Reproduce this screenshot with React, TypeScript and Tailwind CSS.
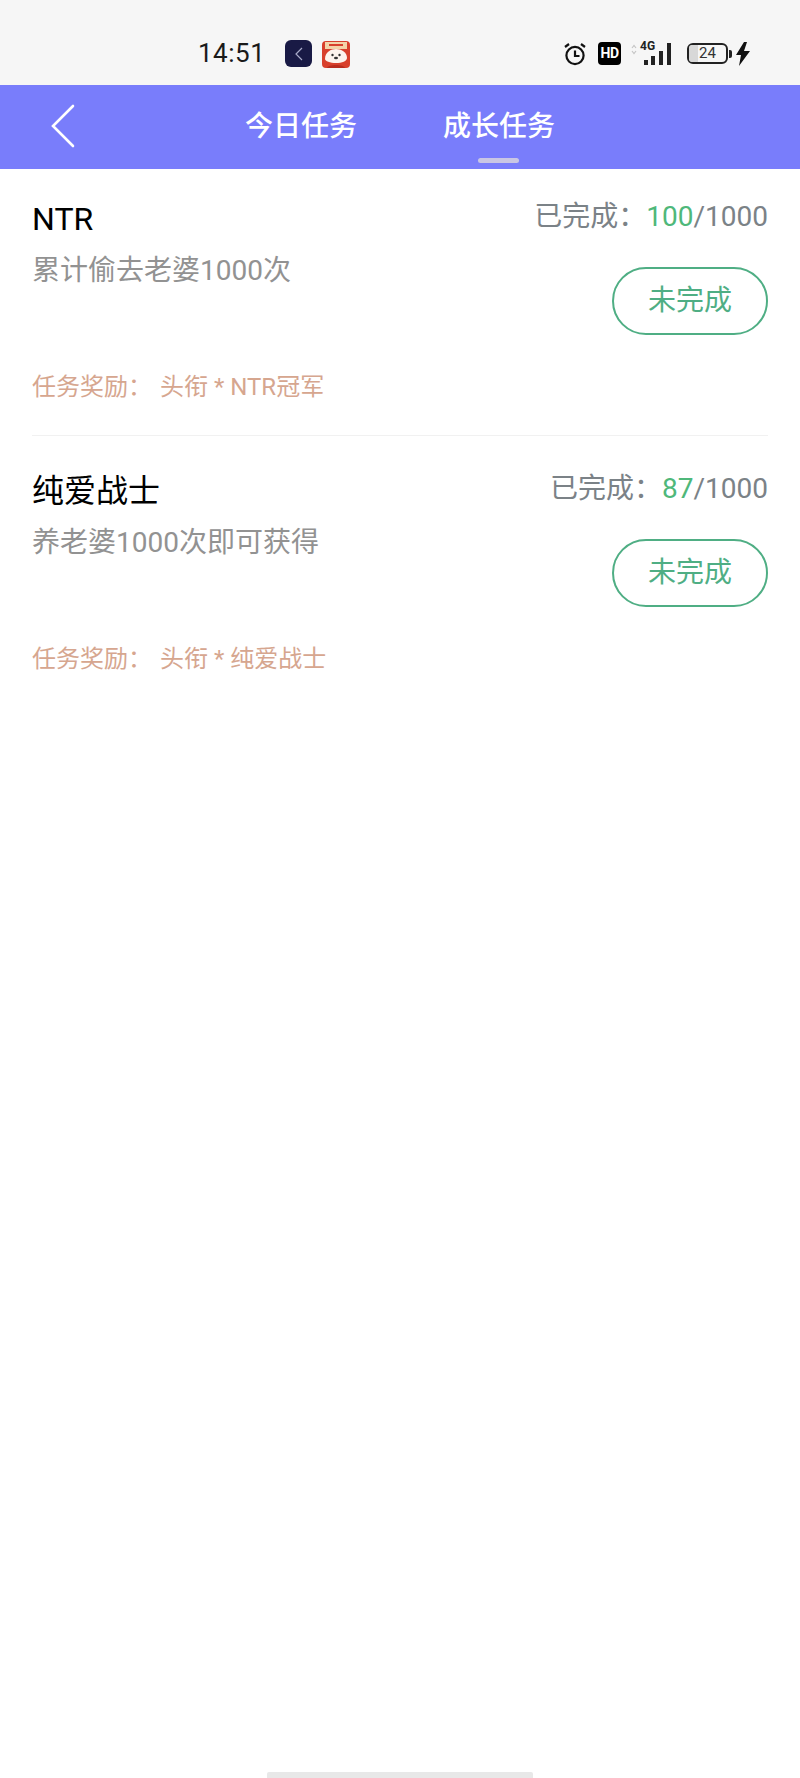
const FONT = "font-['Roboto','Noto_Sans_CJK_SC',sans-serif]";

interface TaskRowProps {
  title: string;
  description: string;
  done: number;
  total: number;
  reward: string;
  divider?: boolean;
}

function TaskRow({ title, description, done, total, reward, divider }: TaskRowProps) {
  return (
    <div className={`mx-[32px] flex h-[267px] justify-between pt-[26px] ${divider ? "mb-[5px] border-b border-[#f1f1f1]" : ""}`}>
      <div className="flex flex-col">
        <h3 className="h-[48px] text-[32px] leading-[48px] font-normal text-black">{title}</h3>
        <p className="mt-[8px] h-[40px] text-[28px] leading-[40px] text-[#929292]">{description}</p>
        <p className="mt-[78px] text-[24px] leading-[36px] whitespace-pre text-[#d6a68f]">
          任务奖励：<span className="ml-[8px]">头衔 * {reward}</span>
        </p>
      </div>
      <div className="flex flex-col items-end">
        <p className="mt-[1px] h-[42px] text-[28px] leading-[42px] text-[#7b8287]">
          已完成：<span className="text-[#4fb87a]">{done}</span>/{total}
        </p>
        <button className="mt-[29px] h-[68px] w-[156px] rounded-full border-2 border-[#4fae84] text-[28px] text-[#4fae84]">
          未完成
        </button>
      </div>
    </div>
  );
}

function StatusBar() {
  return (
    <div className="flex h-[85px] items-center bg-[#f6f6f6] pt-[22px] pl-[198px] text-[#1a1a1a]">
      <span className="w-[87px] text-[26px] tracking-[0.5px]">14:51</span>
      <div className="flex h-[27px] w-[27px] items-center justify-center rounded-[6px] bg-[#191a45]">
        <svg width="14" height="16" viewBox="0 0 14 16" fill="none" stroke="#a9abc9" strokeWidth="1.2">
          <path d="M10 2 4 8l6 6" />
        </svg>
      </div>
      <svg className="ml-[10px] mt-[1px]" width="28" height="27" viewBox="0 0 28 27">
        <rect width="28" height="27" rx="4" fill="#d8402c" />
        <rect x="3" y="1" width="22" height="7" fill="#f3d3a8" />
        <rect x="7" y="3" width="14" height="2" fill="#d8402c" />
        <path d="M3 18c0-7 6-10 11-10s11 3 11 9c0 3-5 5-11 5S3 20 3 18z" fill="#fdf4ee" />
        <circle cx="10.5" cy="14" r="1.2" fill="#333" />
        <circle cx="17.5" cy="14" r="1.2" fill="#333" />
        <ellipse cx="14" cy="17" rx="2" ry="1.2" fill="#333" />
        <path d="M5 27c1-4 17-4 18 0z" fill="#b92c1e" />
      </svg>

      <svg className="ml-[213px]" width="24" height="24" viewBox="0 0 24 24" fill="none" stroke="#111" strokeWidth="2.2">
        <circle cx="12" cy="13.5" r="8.6" />
        <path d="M12 8.5v5.5h4.5M2 5l4-3M22 5l-4-3" />
      </svg>
      <span className="ml-[11px] flex h-[23px] w-[23px] items-center justify-center rounded-[4px] bg-black text-[14px] font-bold tracking-[-0.5px] text-white">
        HD
      </span>
      <div className="relative ml-[10px] h-[24px] w-[42px]">
        <span className="absolute top-[-3px] left-[9px] text-[12px] leading-[14px] font-bold text-[#222]">4G</span>
        <svg className="absolute top-0 left-0" width="42" height="24" viewBox="0 0 42 24">
          <path d="M1 6 3 3.5 5 6M1 9l2 2.5L5 9" fill="none" stroke="#c4c4c4" strokeWidth="1.2" />
          <rect x="13" y="18" width="4" height="5" fill="#222" />
          <rect x="20" y="14" width="4" height="9" fill="#222" />
          <rect x="28" y="9" width="4" height="14" fill="#222" />
          <rect x="36" y="1" width="4" height="22" fill="#222" />
        </svg>
      </div>
      <div className="relative ml-[14px] flex h-[21px] w-[41px] items-center justify-center rounded-[6px] border-2 border-[#222] text-[15px] leading-none text-[#333]">
        <span className="absolute top-0 bottom-0 left-0 w-[9px] rounded-l-[3px] bg-[#d8d8d8]" />
        <span className="relative">24</span>
      </div>
      <span className="ml-[1px] h-[8px] w-[3px] rounded-r-[2px] bg-[#222]" />
      <svg className="ml-[4px]" width="14" height="24" viewBox="0 0 14 24">
        <path d="M8 0 0 13h5l-2 11 11-15H8l3-9z" fill="#111" />
      </svg>
    </div>
  );
}

export default function App() {
  return (
    <div className={`flex h-[1778px] w-[800px] flex-col bg-white ${FONT}`}>
      <StatusBar />

      <header className="relative flex h-[84px] items-center bg-[#797dfb] pl-[245px] text-[28px] font-medium text-white">
        <svg className="absolute top-[19px] left-[50px]" width="26" height="44" viewBox="0 0 26 44" fill="none" stroke="white" strokeWidth="2.6" strokeLinecap="round">
          <path d="M23 2 3 22l20 20" />
        </svg>
        <span className="w-[198px]">今日任务</span>
        <span>成长任务</span>
        <span className="absolute top-[73px] left-[478px] h-[5px] w-[41px] rounded-full bg-[#c9c6e4]" />
      </header>

      <TaskRow title="NTR" description="累计偷去老婆1000次" done={100} total={1000} reward="NTR冠军" divider />
      <TaskRow title="纯爱战士" description="养老婆1000次即可获得" done={87} total={1000} reward="纯爱战士" />

      <div className="flex-1" />
      <div className="mx-auto h-[6px] w-[266px] rounded-t-[2px] bg-[#e8e8e8]" />
    </div>
  );
}
